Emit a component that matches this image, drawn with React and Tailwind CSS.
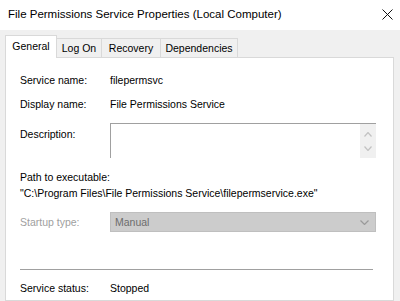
import React from "react";

const Chev = ({ up, className, w = 8, h = 5, color = "#c2c2c2" }) => (
  <svg width={w} height={h} viewBox={`0 0 ${w} ${h}`} className={className}>
    <polyline
      points={up ? `0.5,${h - 0.5} ${w / 2},0.5 ${w - 0.5},${h - 0.5}` : `0.5,0.5 ${w / 2},${h - 0.5} ${w - 0.5},0.5`}
      fill="none"
      stroke={color}
      strokeWidth="1.2"
    />
  </svg>
);

export default function App() {
  const font = { fontFamily: '"Liberation Sans", Arial, sans-serif' };
  return (
    <div className="w-[400px] h-[301px] overflow-hidden bg-[#f0f0f0] flex flex-col text-black" style={font}>
      {/* Title bar */}
      <div className="h-[30px] bg-white flex items-center justify-between pl-[8px] pr-[7px] shrink-0">
        <span className="text-[11.5px] leading-none text-black">File Permissions Service Properties (Local Computer)</span>
        <svg width="11" height="11" viewBox="0 0 11 11" className="mt-[-2px]">
          <path d="M0.5 0.5 L10.5 10.5 M10.5 0.5 L0.5 10.5" stroke="#111" strokeWidth="1" fill="none" />
        </svg>
      </div>

      {/* Body */}
      <div className="flex-1 flex flex-col pl-[5px] pr-[6px] pt-[5px]">
        {/* Tabs */}
        <div className="flex items-end h-[22px] text-[10.5px] leading-none">
          <div className="relative z-10 -mb-px h-[23px] w-[52px] bg-white border border-b-0 border-[#d9d9d9] flex items-start justify-center pt-[5px]">
            General
          </div>
          <div className="h-[19px] w-[45px] bg-[#f0f0f0] border border-l-0 border-b-0 border-[#d9d9d9] flex items-center justify-center">
            Log On
          </div>
          <div className="h-[19px] w-[59px] bg-[#f0f0f0] border border-l-0 border-b-0 border-[#d9d9d9] flex items-center justify-center">
            Recovery
          </div>
          <div className="h-[19px] w-[77px] bg-[#f0f0f0] border border-l-0 border-b-0 border-[#d9d9d9] flex items-center justify-center">
            Dependencies
          </div>
        </div>

        {/* Panel */}
        <div className="flex-1 bg-white border border-[#d9d9d9] pl-[14px] pr-[17px] pt-[15px] text-[10.5px] leading-[14px]">
          <div className="flex">
            <span className="w-[90px]">Service name:</span>
            <span>filepermsvc</span>
          </div>
          <div className="flex mt-[10px]">
            <span className="w-[90px]">Display name:</span>
            <span>File Permissions Service</span>
          </div>
          <div className="flex mt-[12px]">
            <span className="w-[90px] pt-[4px]">Description:</span>
            <div className="flex-1 h-[35px] border-t border-l border-[#a0a0a0] flex justify-end">
              <div className="w-[16px] h-full bg-[#f0f0f0] flex flex-col items-center justify-around py-[3px]">
                <Chev up />
                <Chev />
              </div>
            </div>
          </div>
          <div className="mt-[12px]">Path to executable:</div>
          <div className="mt-[2px]">"C:\Program Files\File Permissions Service\filepermservice.exe"</div>
          <div className="flex items-center mt-[12px]">
            <span className="w-[90px] text-[#a0a0a0]">Startup type:</span>
            <div className="flex-1 h-[20px] bg-[#cccccc] border border-[#bfbfbf] flex items-center justify-between pl-[4px] pr-[6px] text-[#6d6d6d]">
              <span>Manual</span>
              <Chev w={9} h={5} color="#9a9a9a" />
            </div>
          </div>
          <div className="mt-[37px] h-px bg-[#a0a0a0] mr-[3px]" />
          <div className="flex mt-[11px]">
            <span className="w-[90px]">Service status:</span>
            <span>Stopped</span>
          </div>
        </div>
      </div>
    </div>
  );
}
